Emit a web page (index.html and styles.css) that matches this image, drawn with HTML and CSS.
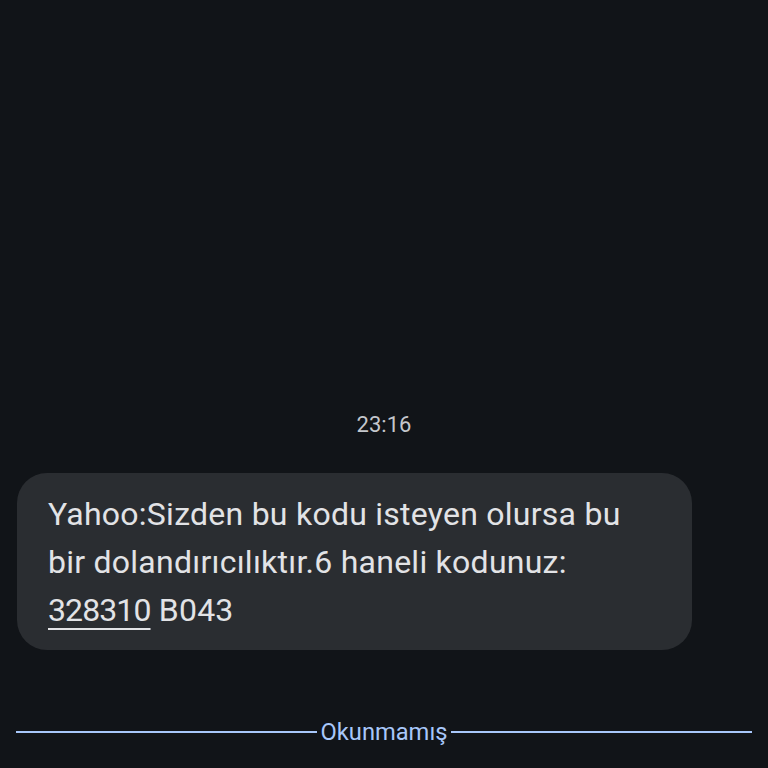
FILE: index.html
```html
<!DOCTYPE html>
<html>
<head>
<meta charset="utf-8">
<link rel="stylesheet" href="styles.css">
</head>
<body>
<div class="screen">
  <div class="spacer"></div>
  <div class="time">23:16</div>
  <div class="bubble">
    <p class="msg">Yahoo:Sizden bu kodu isteyen olursa bu<br>bir dolandırıcılıktır.6 haneli kodunuz:<br><span class="code">328310</span> B043</p>
  </div>
  <div class="divider">
    <span class="line"></span>
    <span class="label">Okunmamış</span>
    <span class="line"></span>
  </div>
</div>
</body>
</html>
```
FILE: styles.css
```css
html, body {
  margin: 0;
  padding: 0;
  background: #111418;
}
.screen {
  width: 768px;
  height: 768px;
  display: flex;
  flex-direction: column;
  font-family: Roboto, "Noto Sans", sans-serif;
  overflow: hidden;
}
.spacer {
  height: 410px;
}
.time {
  text-align: center;
  color: #c4c7cc;
  font-size: 22px;
  line-height: 30px;
  height: 30px;
}
.bubble {
  margin: 33px 0 0 17px;
  width: 675px;
  height: 177px;
  box-sizing: border-box;
  background: #2a2d31;
  border-radius: 30px;
  padding: 17px 20px 0 31px;
}
.msg {
  margin: 0;
  color: #e2e3e6;
  font-size: 32px;
  line-height: 48px;
  letter-spacing: 0.25px;
  white-space: nowrap;
}
.code {
  letter-spacing: -0.9px;
  text-decoration: underline;
  text-decoration-thickness: 2px;
  text-underline-offset: 7px;
}
.divider {
  margin: 67px 16px 0 16px;
  display: flex;
  align-items: center;
  gap: 4px;
}
.line {
  flex: 1;
  height: 2px;
  background: #a8c7fa;
}
.label {
  color: #a8c7fa;
  font-size: 23.7px;
  line-height: 30px;
}
```
